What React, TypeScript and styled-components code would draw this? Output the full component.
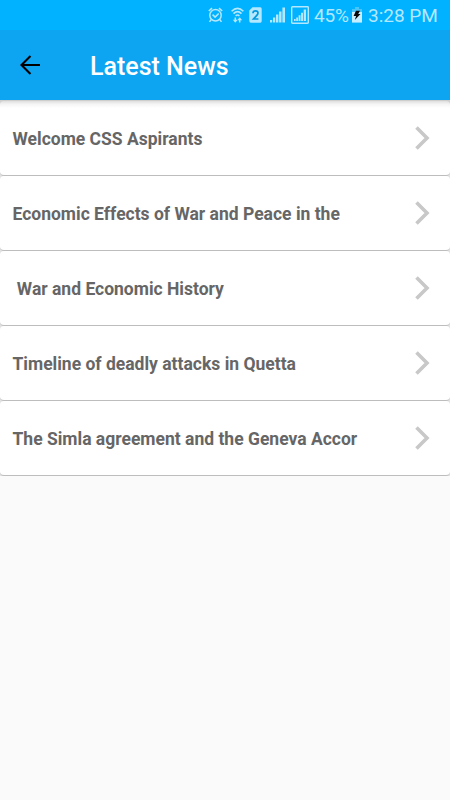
import React from "react";
import styled, { createGlobalStyle } from "styled-components";

const GlobalStyle = createGlobalStyle`
  * { box-sizing: border-box; }
  body { margin: 0; background: #fafafa; font-family: Roboto, sans-serif; }
`;

const Screen = styled.div`
  width: 100%;
  height: 800px;
  display: flex;
  flex-direction: column;
  background: #fafafa;
  overflow: hidden;
`;

const StatusBar = styled.div`
  height: 30px;
  flex: none;
  display: flex;
  align-items: center;
  justify-content: flex-end;
  padding-right: 12px;
  background: #00b2ff;
  color: #b4e8ff;
`;

const StatusIcon = styled.svg<{ $gap: number }>`
  display: block;
  flex: none;
  margin-right: ${(p) => p.$gap}px;
`;

const StatusText = styled.span<{ $width: number; $gap?: number; $spacing?: number }>`
  width: ${(p) => p.$width}px;
  margin-right: ${(p) => p.$gap ?? 0}px;
  font-size: 19px;
  line-height: 30px;
  padding-top: 2px;
  letter-spacing: ${(p) => p.$spacing ?? 0}px;
  white-space: nowrap;
`;

const AppBar = styled.header`
  height: 70px;
  flex: none;
  display: flex;
  align-items: center;
  padding-left: 20px;
  background: #0da4f2;
`;

const BackButton = styled.button`
  display: flex;
  width: 70px;
  padding: 0;
  border: 0;
  background: none;
  color: #000;
`;

const Title = styled.h1`
  margin: 0;
  padding-top: 4px;
  font-size: 25px;
  font-weight: 500;
  line-height: 30px;
  color: #fff;
`;

const NewsList = styled.main`
  display: flex;
  flex-direction: column;
  padding-top: 1px;
  background: linear-gradient(#ccc, #ddd 5px, #e2e2e2 8px);
`;

const NewsCard = styled.article<{ $first: boolean }>`
  height: 75px;
  display: flex;
  align-items: center;
  justify-content: space-between;
  padding: 0 20px 0 12.5px;
  border-bottom: 1px solid #bdbdbd;
  border-radius: 4px;
  background: ${(p) => (p.$first ? "linear-gradient(#dedede, #f4f4f4 3px, #fff 7px)" : "#fff")};
`;

const Headline = styled.h2`
  margin: 0;
  padding-top: 2px;
  font-size: 17.5px;
  font-weight: 700;
  line-height: 24px;
  color: #666;
  white-space: pre;
`;

const news = [
  "Welcome CSS Aspirants",
  "Economic Effects of War and Peace in the",
  " War and Economic History",
  "Timeline of deadly attacks in Quetta",
  "The Simla agreement and the Geneva Accor",
];

const AlarmIcon = () => (
  <StatusIcon $gap={8} width="15" height="16" viewBox="0 0 15 16" fill="none" stroke="currentColor" strokeWidth="1.5">
    <circle cx="7.5" cy="8.3" r="5.7" />
    <path d="M.8 4 4 1.1M11 1.1 14.2 4M4.6 7.6l2.5 2.5 3.6-3.6M3.3 12.5l-1.8 2.4M11.7 12.5l1.8 2.4" />
  </StatusIcon>
);

const WifiIcon = () => (
  <StatusIcon $gap={5} width="13" height="16" viewBox="0 0 13 16" fill="none" stroke="currentColor" strokeWidth="1.6">
    <path d="M.6 4.2Q6.5-1.6 12.4 4.2M2.5 6.6q4-3.8 8 0M4.6 8.8q1.9-1.6 3.8 0" />
    <path d="M4.3 10.4v3.4M8.7 15.6v-3.4" strokeWidth="1.5" />
    <path d="M1.8 12.8h5L4.3 15.8zM6.2 13.2h5l-2.5-2.9z" fill="currentColor" stroke="none" />
  </StatusIcon>
);

const SimIcon = () => (
  <StatusIcon $gap={8} width="13" height="16" viewBox="0 0 13 16" fill="none">
    <path d="M3.5.2h7.8Q12.7.2 12.7 1.7v12.4q0 1.6-1.4 1.6H1.8Q.3 15.7.3 14.1V3.5z" fill="currentColor" />
    <path d="M4 6.2q0-2.3 2.5-2.3T9 6.1q0 1-1.2 2.3L4.5 12H9.4" stroke="#0099dd" strokeWidth="1.7" />
  </StatusIcon>
);

const SignalIcon = () => (
  <StatusIcon $gap={6} width="15" height="16" viewBox="0 0 15 16" fill="currentColor">
    <path d="M0 13h2.2v2.5H0zM3 10.5h2.3v5H3zM6 7.5h2.4v8H6zM9.1 4.5h2.4v11H9.1zM12.4.5H15v15h-2.6z" />
  </StatusIcon>
);

const BoxedSignalIcon = () => (
  <StatusIcon $gap={5} width="18" height="18" viewBox="0 0 18 18" fill="currentColor">
    <rect x=".7" y=".7" width="16.6" height="16.6" rx=".7" fill="none" stroke="currentColor" strokeWidth="1.4" />
    <path d="M3 13h1.7v2H3zM5.2 11.5H7V15H5.2zM7.6 9.3h1.9V15H7.6zM10.1 6.8H12V15h-1.9zM12.7 3.5h2.3V15h-2.3z" />
  </StatusIcon>
);

const BatteryIcon = () => (
  <StatusIcon $gap={6} width="10" height="16" viewBox="0 0 10 16">
    <path d="M3 0h4v2h3v13.5H0V2h3z" fill="#49c5f7" />
    <path d="M0 5h10v10.5H0z" fill="#c8efff" />
    <path d="M4 3.8h4L6.2 7h2.3L2.8 13l1.3-4H1.6z" fill="#080808" />
  </StatusIcon>
);

const ArrowIcon = () => (
  <svg width="21" height="20" viewBox="0 0 21 20" fill="none" stroke="currentColor" strokeWidth="2.1">
    <path d="M10.5 1 1.5 10l9 9M1.5 10H20" />
  </svg>
);

const Chevron = () => (
  <svg width="15" height="25" viewBox="0 0 15 25" fill="none" stroke="#c8c8c8" strokeWidth="3.6">
    <path d="M1.5 1.5 12 12 1.5 22.5" />
  </svg>
);

export default function App() {
  return (
    <>
      <GlobalStyle />
      <Screen>
        <StatusBar>
          <AlarmIcon />
          <WifiIcon />
          <SimIcon />
          <SignalIcon />
          <BoxedSignalIcon />
          <StatusText $width={34} $gap={4} $spacing={-0.2}>45%</StatusText>
          <BatteryIcon />
          <StatusText $width={70}>3:28 PM</StatusText>
        </StatusBar>
        <AppBar>
          <BackButton aria-label="Back">
            <ArrowIcon />
          </BackButton>
          <Title>Latest News</Title>
        </AppBar>
        <NewsList>
          {news.map((headline, i) => (
            <NewsCard key={headline} $first={i === 0}>
              <Headline>{headline}</Headline>
              <Chevron />
            </NewsCard>
          ))}
        </NewsList>
      </Screen>
    </>
  );
}
